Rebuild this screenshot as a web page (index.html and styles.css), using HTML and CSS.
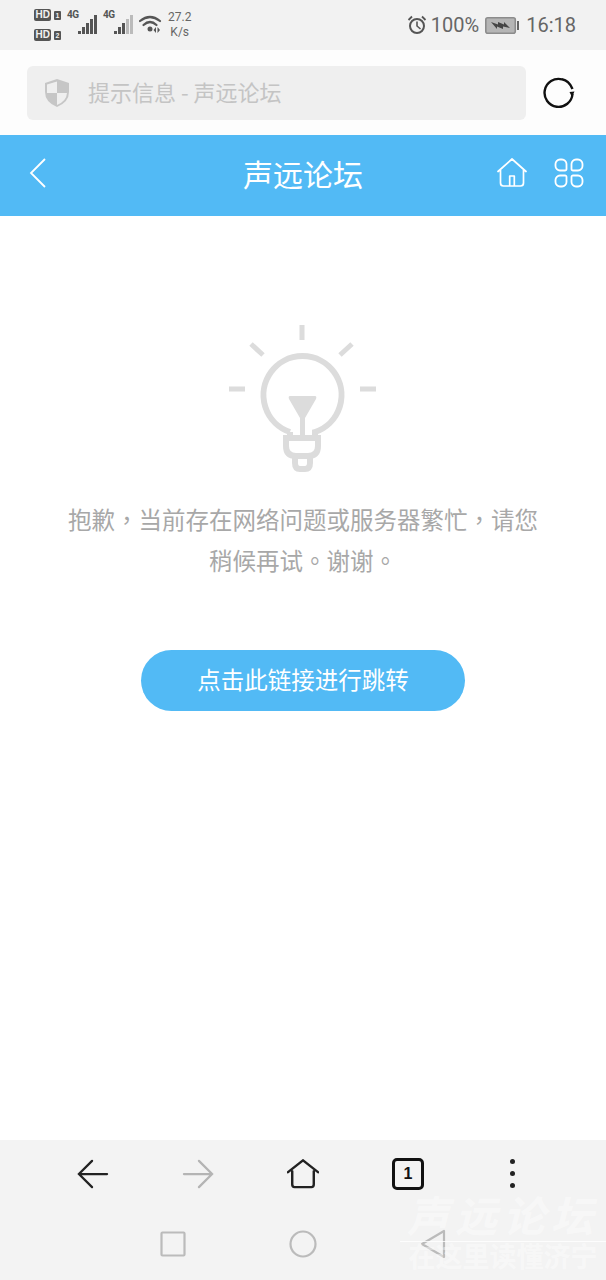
FILE: index.html
```html
<!DOCTYPE html>
<html lang="zh">
<head>
<meta charset="utf-8">
<title>声远论坛</title>
<link rel="stylesheet" href="styles.css">
</head>
<body>
<div class="phone">
  <header class="status">
    <div class="status-left">
      <div class="hd-col">
        <div class="hd-row"><span class="hd">HD</span><span class="sim">1</span></div>
        <div class="hd-row"><span class="hd">HD</span><span class="sim">2</span></div>
      </div>
      <span class="net net-a">4G</span>
      <svg class="bars" width="20" height="20" viewBox="0 0 20 20"><g fill="#555"><rect x="0" y="16" width="3" height="3"/><rect x="4" y="12" width="3" height="7"/><rect x="8" y="8" width="3" height="11"/><rect x="12" y="4" width="3" height="15"/><rect x="16" y="0" width="3" height="19"/></g></svg>
      <span class="net net-b">4G</span>
      <svg class="bars" width="20" height="20" viewBox="0 0 20 20"><g fill="#555"><rect x="0" y="16" width="3" height="3"/><rect x="4" y="12" width="3" height="7"/><rect x="8" y="8" width="3" height="11"/></g><g fill="#bbb"><rect x="12" y="4" width="3" height="15"/><rect x="16" y="0" width="3" height="19"/></g></svg>
      <svg class="wifi" width="24" height="20" viewBox="0 0 24 20"><g fill="none" stroke="#555" stroke-width="2.200" stroke-linecap="round"><path d="M1 6 Q11 -2 21 6"/><path d="M4.500 10 Q11 4 17.500 10"/></g><circle cx="11" cy="14" r="2.500" fill="#555"/><path d="M17 12 v6 l-2.500 -3 z M18.500 12 v6 l2.500 -3 z" fill="#555"/></svg>
      <div class="speed"><span>27.2</span><span>K/s</span></div>
    </div>
    <div class="status-right">
      <svg class="alarm" width="20" height="20" viewBox="0 0 20 20"><circle cx="10" cy="11" r="7" fill="none" stroke="#555" stroke-width="2"/><path d="M10 6.500 V11 L13.500 14" fill="none" stroke="#555" stroke-width="1.600"/><path d="M1.500 5 L5 1.500 M18.500 5 L15 1.500" stroke="#555" stroke-width="1.800"/></svg>
      <span class="pct">100%</span>
      <svg class="battery" width="35" height="17" viewBox="0 0 35 17"><rect x="0.800" y="0.800" width="29.500" height="15.400" rx="2" fill="#b5b5b5" stroke="#8c8c8c" stroke-width="1.600"/><rect x="32" y="4" width="2" height="9" fill="#666"/><path d="M6 5 L13 7.500 L13 5 L19 7.500 L19 5 L25 11 L18 9.500 L18 12 L12 9.500 L12 12 Z" fill="#444"/></svg>
      <span class="clock">16:18</span>
    </div>
  </header>

  <div class="addr">
    <div class="addr-field">
      <svg class="shield" width="26" height="30" viewBox="0 0 26 30"><path d="M13 1 L25 5 V14 Q25 24 13 29 Q1 24 1 14 V5 Z" fill="#c6c6c6"/><path d="M13 3.500 V15 H3 V6.500 Z M13 15 H23 Q22.500 23 13 27 Z" fill="#efefef"/></svg>
      <span class="addr-text">提示信息 - 声远论坛</span>
    </div>
    <svg class="reload" width="32" height="32" viewBox="0 0 32 32"><path d="M29.500 17 A14 14 0 1 1 19 2.300 Q26 3.500 29.500 12" fill="none" stroke="#111" stroke-width="2.400"/><path d="M26.500 15 L31.500 14.500 L29 20 Z" fill="#111"/></svg>
  </div>

  <nav class="titlebar">
    <svg class="back" width="18" height="30" viewBox="0 0 18 30"><path d="M16 1 L2 15 L16 29" fill="none" stroke="#fff" stroke-width="1.800"/></svg>
    <h1 class="title">声远论坛</h1>
    <div class="title-icons">
      <svg width="30" height="29" viewBox="0 0 30 29"><path d="M1 13.500 L15 1 L29 13.500 M3.500 12 V25 Q3.500 28 6.500 28 H23.500 Q26.500 28 26.500 25 V12 M12.700 28 V18 H17.300 V28" fill="none" stroke="#fff" stroke-width="1.700" stroke-linejoin="round" stroke-linecap="round"/></svg>
      <svg width="30" height="30" viewBox="0 0 30 30"><g fill="none" stroke="#fff" stroke-width="1.800"><path id="cell" d="M6 1.500 H8 A4.500 4.500 0 0 1 12.500 6 V11 A1.500 1.500 0 0 1 11 12.500 H6 A4.500 4.500 0 0 1 1.500 8 V6 A4.500 4.500 0 0 1 6 1.500 Z"/><path transform="translate(30 0) scale(-1 1)" d="M6 1.500 H8 A4.500 4.500 0 0 1 12.500 6 V11 A1.500 1.500 0 0 1 11 12.500 H6 A4.500 4.500 0 0 1 1.500 8 V6 A4.500 4.500 0 0 1 6 1.500 Z"/><path transform="translate(0 30) scale(1 -1)" d="M6 1.500 H8 A4.500 4.500 0 0 1 12.500 6 V11 A1.500 1.500 0 0 1 11 12.500 H6 A4.500 4.500 0 0 1 1.500 8 V6 A4.500 4.500 0 0 1 6 1.500 Z"/><path transform="translate(30 30) scale(-1 -1)" d="M6 1.500 H8 A4.500 4.500 0 0 1 12.500 6 V11 A1.500 1.500 0 0 1 11 12.500 H6 A4.500 4.500 0 0 1 1.500 8 V6 A4.500 4.500 0 0 1 6 1.500 Z"/></g></svg>
    </div>
  </nav>

  <main class="content">
    <svg class="bulb" width="150" height="150" viewBox="229 325 150 150">
      <g fill="none" stroke="#dcdcdc" stroke-width="6">
        <path d="M291 432 A39 39 0 1 1 316 432 V438 M291 432 V438"/>
        <path d="M287 438 H319 V446 Q319 456 309 456 H297 Q287 456 287 446 Z"/>
        <path d="M296 456 V463 Q296 469 301 469 H306 Q311 469 311 463 V456"/>
      </g>
      <g fill="none" stroke="#dcdcdc" stroke-width="5">
        <path d="M303 325 V340 M230 389 H246 M361 389 H377 M252 344 L264 355 M353 344 L341 355"/>
      </g>
      <path d="M291 396 H316 Q318 396 317 399 L306 418 V438 H301 V418 L290 399 Q289 396 291 396 Z" fill="#dcdcdc"/>
    </svg>
    <p class="message" lang="zh-Hant">抱歉，当前存在网络问题或服务器繁忙，请您稍候再试。谢谢。</p>
    <a class="jump">点击此链接进行跳转</a>
  </main>

  <footer class="bottom">
    <div class="browser-bar">
      <svg width="32" height="30" viewBox="0 0 34 32"><path d="M32 16 H2 M16 2 L2 16 L16 30" fill="none" stroke="#222" stroke-width="2.400" stroke-linecap="round"/></svg>
      <svg width="32" height="30" viewBox="0 0 34 32"><path d="M2 16 H32 M18 2 L32 16 L18 30" fill="none" stroke="#b4b4b4" stroke-width="2.400" stroke-linecap="round"/></svg>
      <svg width="32" height="30" viewBox="0 0 34 32"><path d="M1 14 L17 1.500 L33 14 M5.500 13 V27 Q5.500 30 8 30 H26 Q28.500 30 28.500 27 V13" fill="none" stroke="#222" stroke-width="2.600" stroke-linecap="round"/></svg>
      <span class="tabs">1</span>
      <span class="more"><i></i><i></i><i></i></span>
    </div>
    <div class="system-bar">
      <svg width="26" height="26" viewBox="0 0 26 26"><rect x="1.500" y="1.500" width="23" height="23" rx="1" fill="none" stroke="#bbb" stroke-width="2.200"/></svg>
      <svg width="28" height="28" viewBox="0 0 28 28"><circle cx="14" cy="14" r="12.500" fill="none" stroke="#bbb" stroke-width="2.200"/></svg>
      <svg width="26" height="30" viewBox="0 0 26 30"><path d="M24 2 V28 L2 15 Z" fill="none" stroke="#bbb" stroke-width="2.200" stroke-linejoin="round"/></svg>
    </div>
    <div class="watermark">
      <div class="wm-top">声远论坛</div>
      <div class="wm-bottom">在这里读懂济宁</div>
    </div>
  </footer>
</div>
</body>
</html>
```

FILE: styles.css
```css
* { box-sizing: border-box; }
html, body { margin: 0; padding: 0; }
body { font-family: "Noto Sans CJK SC", "Noto Sans", sans-serif; background: #fff; }
.phone { width: 606px; height: 1280px; display: flex; flex-direction: column; overflow: hidden; }

.status { height: 50px; flex: none; background: #f2f2f2; display: flex; justify-content: space-between; align-items: center; padding: 0 30px 0 34px; color: #555; }
.status-left, .status-right { display: flex; align-items: center; }
.hd-col { display: flex; flex-direction: column; gap: 8px; }
.hd-row { display: flex; align-items: center; gap: 3px; }
.hd { font: bold 10px/12px "Liberation Sans", sans-serif; background: #555; color: #f2f2f2; border-radius: 2px; padding: 0 1.500px; width: 17px; height: 12px; }
.sim { font: bold 7px/9px "Liberation Sans", sans-serif; background: #555; color: #f2f2f2; width: 7px; height: 9px; text-align: center; border-radius: 1px; }
.net { font: bold 10px/10px "Roboto", sans-serif; color: #555; align-self: flex-start; margin-top: 1px; width: 11px; letter-spacing: -0.5px; }
.net-a { margin-left: 6px; }
.net-b { margin-left: 5px; }
.bars { margin-left: 0; }
.wifi { margin-left: 5px; }
.speed { display: flex; flex-direction: column; align-items: center; margin-left: 5px; font: 12px/15px "Roboto", sans-serif; color: #666; }
.alarm { margin-right: 4px; }
.pct { font: 20px/24px "Roboto", sans-serif; color: #666; margin-right: 6px; }
.battery { margin-right: 6px; }
.clock { font: 20px/24px "Roboto", sans-serif; color: #666; }

.addr { height: 85px; flex: none; background: #fdfdfd; display: flex; align-items: center; padding: 1px 31px 0 27px; justify-content: space-between; }
.addr-field { width: 499px; height: 54px; background: #efefef; border-radius: 6px; display: flex; align-items: center; gap: 18px; padding: 0 0 0 17px; }
.shield { flex: none; }
.addr-text { font-size: 22px; line-height: 30px; color: #c4c4c4; position: relative; top: -2px; }
.reload { flex: none; }

.titlebar { height: 81px; flex: none; background: #52baf5; display: flex; align-items: center; position: relative; padding: 0 22px 5px 29px; justify-content: space-between; }
.title { position: absolute; left: 0; right: 0; top: 18px; margin: 0; text-align: center; font-size: 30px; font-weight: 400; line-height: 40px; color: #fff; }
.title-icons { display: flex; gap: 27px; }
.title-icons svg { display: block; }

.content { flex: 1; display: flex; flex-direction: column; align-items: center; padding-top: 109px; background: #fff; }
.bulb { display: block; flex: none; }
.message { margin: 24px 0 0; width: 474px; font-family: "Noto Sans CJK TC", "Noto Sans CJK SC", sans-serif; font-size: 23.500px; line-height: 41px; color: #a8a8a8; text-align: center; }
.jump { margin-top: 69px; width: 324px; height: 61px; border-radius: 31px; background: #52baf5; color: #fff; font-size: 23.500px; line-height: 59px; text-align: center; }

.bottom { height: 140px; flex: none; background: #f3f3f3; position: relative; }
.browser-bar { height: 67px; display: flex; align-items: center; gap: 73px; padding: 0 0 0 77px; }
.browser-bar svg { display: block; flex: none; }
.tabs { width: 32px; height: 32px; flex: none; border: 3px solid #111; border-radius: 5px; font: bold 16px/26px "Liberation Sans", sans-serif; text-align: center; color: #111; }
.more { display: flex; flex-direction: column; gap: 7px; width: 30px; align-items: center; flex: none; }
.more i { width: 5px; height: 5px; border-radius: 50%; background: #222; display: block; }
.system-bar { height: 73px; display: flex; align-items: center; justify-content: space-between; padding: 0 160px; }
.watermark { position: absolute; left: 400px; top: 55px; width: 206px; color: rgba(255,255,255,.42); text-align: center; font-family: "Liberation Sans", "Noto Sans CJK SC", sans-serif; }
.wm-top { font-style: italic; font-weight: bold; font-size: 42px; line-height: 46px; letter-spacing: 6px; border-bottom: 1px solid rgba(255,255,255,.8); white-space: nowrap; }
.wm-bottom { font-weight: bold; font-size: 27px; line-height: 33px; white-space: nowrap; }
```
